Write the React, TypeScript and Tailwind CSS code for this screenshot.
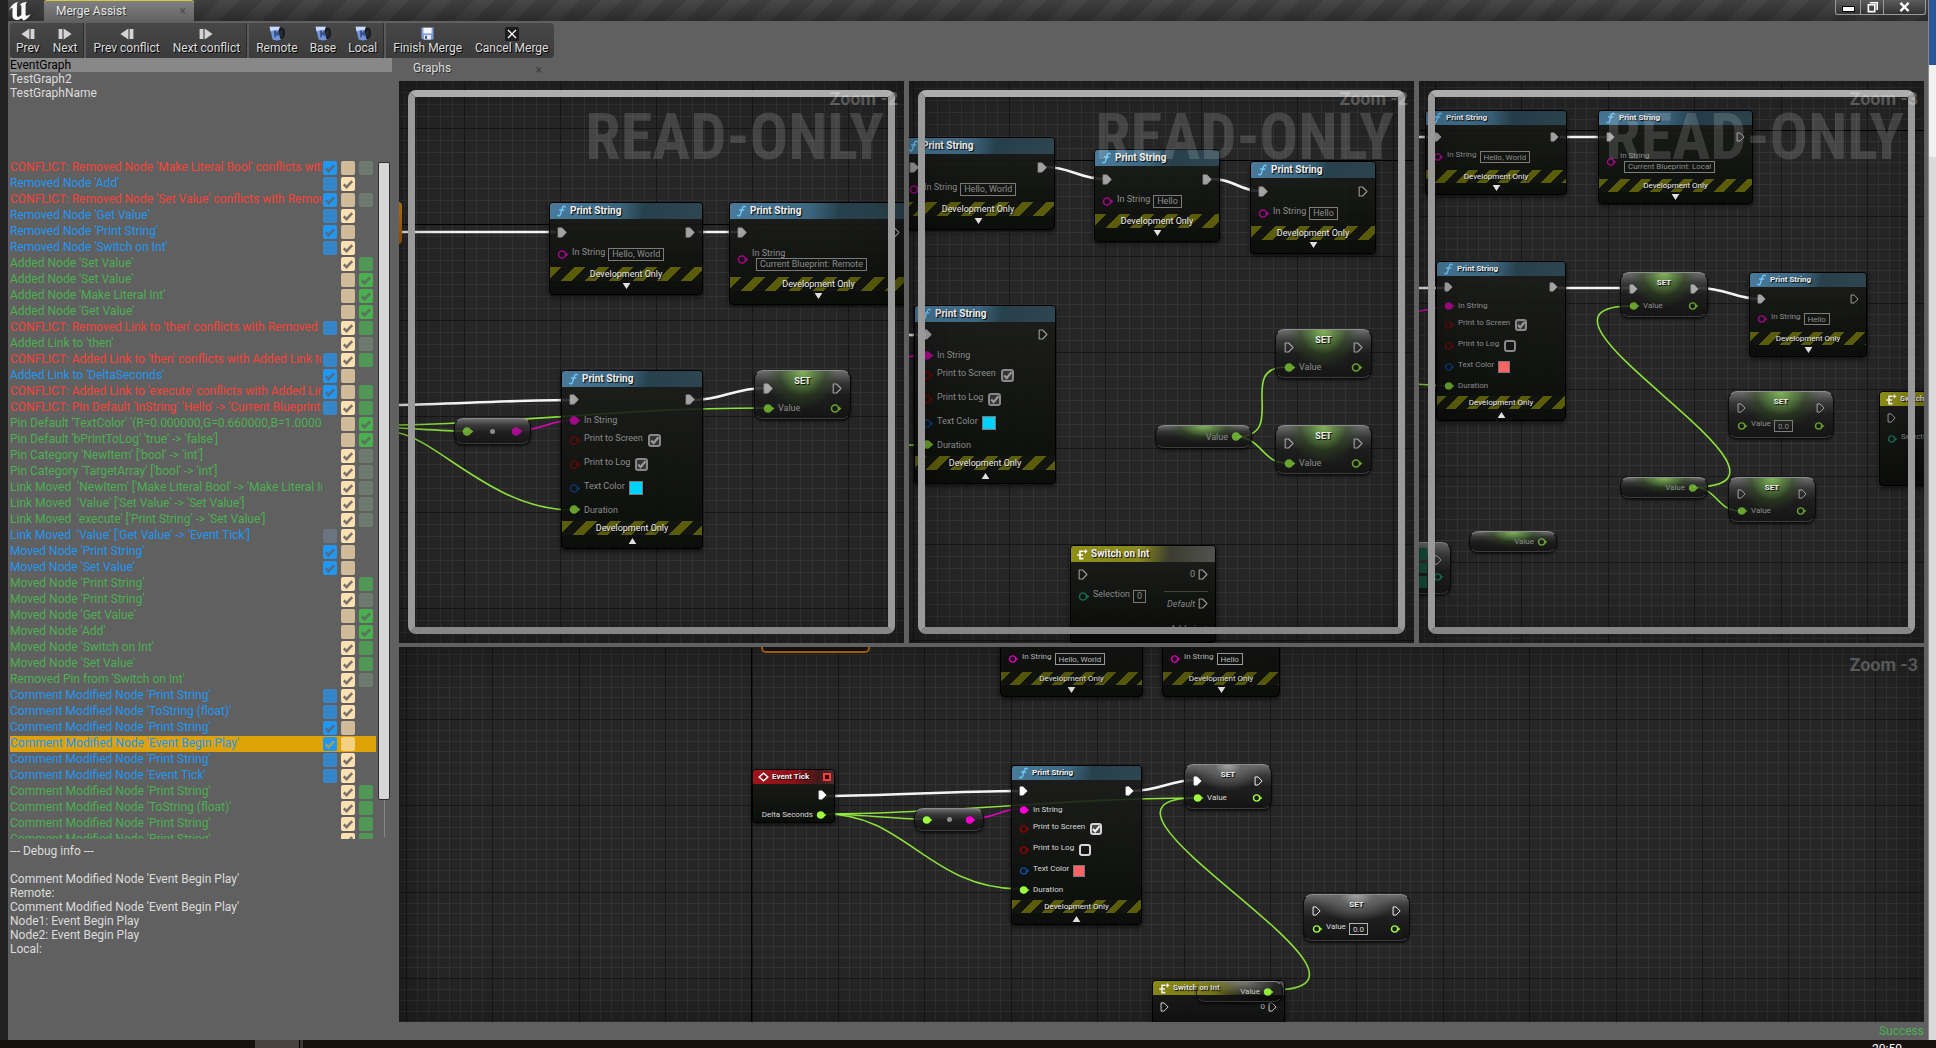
import { createContext, useContext, useId, type ReactNode } from "react";

/* ---------- canvas context ---------- */

type View = { small: boolean; dim: boolean };
const ViewContext = createContext<View>({ small: false, dim: false });
const useView = () => useContext(ViewContext);

const LIME = "#9dff3f";
const MAGENTA = "#ff00d4";
const RED = "#930000";
const BLUE = "#0b4da8";
const TEAL = "#1ba57c";

/* ---------- pins ---------- */

function ExecPin({ filled = false }: { filled?: boolean }) {
  const { dim, small } = useView();
  return (
    <svg
      viewBox="0 0 10 11"
      className={`${small ? "h-[10px] w-[9px]" : "h-[11px] w-[10px]"} shrink-0 ${dim ? "opacity-60" : ""}`}
    >
      <path
        d="M1.2 1H4.6L9 5.5L4.6 10H1.2Z"
        fill={filled ? "#fff" : "none"}
        stroke="#f2f2f2"
        strokeWidth="1.1"
        strokeLinejoin="round"
      />
    </svg>
  );
}

function DataPin({ color, filled = false }: { color: string; filled?: boolean }) {
  const { dim, small } = useView();
  return (
    <svg
      viewBox="0 0 12 9"
      className={`${small ? "h-[8px] w-[11px]" : "h-[9px] w-[12px]"} shrink-0 ${dim ? "opacity-60" : ""}`}
    >
      <circle cx="5" cy="4.5" r="3.5" fill={filled ? color : "none"} stroke={color} strokeWidth="1.6" />
      <path d="M9 2.4L11.4 4.5L9 6.6Z" fill={color} />
    </svg>
  );
}

/* ---------- small node parts ---------- */

function Label({ children, raised = false, htmlFor }: { children: ReactNode; raised?: boolean; htmlFor?: string }) {
  const { dim, small } = useView();
  const cls = `${small ? "text-[8px]" : "text-[9px]"} ${dim ? "text-[#8d8d8d]" : "text-[#d8d8d8]"} ${
    raised ? "mb-[4px]" : ""
  } leading-[10px] whitespace-nowrap`;
  return htmlFor ? (
    <label htmlFor={htmlFor} className={cls}>
      {children}
    </label>
  ) : (
    <span className={cls}>{children}</span>
  );
}

function Field({ id, value }: { id: string; value: string }) {
  const { dim, small } = useView();
  return (
    <input
      id={id}
      readOnly
      defaultValue={value}
      className={`${small ? "h-[12px] text-[8px]" : "h-[13px] text-[9px]"} ${
        dim ? "border-[#7c7c7c] text-[#8d8d8d]" : "border-[#b5b5b5] text-[#d8d8d8]"
      } field-sizing-content border bg-transparent px-[3px] leading-[10px] outline-none`}
    />
  );
}

function Tick({ id, checked }: { id: string; checked: boolean }) {
  const { dim, small } = useView();
  return (
    <span className={`relative ml-[2px] flex ${dim ? "opacity-60" : ""}`}>
      <input
        id={id}
        type="checkbox"
        defaultChecked={checked}
        className={`${small ? "size-[12px]" : "size-[13px]"} peer appearance-none rounded-[3px] border-2 border-[#d5d5d5] bg-[#141414] checked:bg-[#4a4a4a]`}
      />
      <svg viewBox="0 0 12 12" className="pointer-events-none absolute inset-0 hidden size-full peer-checked:block">
        <path d="M3 6L5.2 8.4L9.6 3" fill="none" stroke="#f2f2f2" strokeWidth="2" />
      </svg>
    </span>
  );
}

function Row({ h, left, right }: { h: string; left?: ReactNode; right?: ReactNode }) {
  return (
    <div className={`flex items-center justify-between px-2 ${h}`}>
      <div className="flex items-center gap-[3px]">{left}</div>
      <div className="flex items-center gap-[3px]">{right}</div>
    </div>
  );
}

function DevelopmentOnly({ open = false }: { open?: boolean }) {
  const { small } = useView();
  return (
    <>
      <div
        className={`${
          small
            ? "h-[13px] bg-[repeating-linear-gradient(135deg,#5b5d0b_0_7px,#12140f_7px_15px)] text-[8px]"
            : "h-[14px] bg-[repeating-linear-gradient(135deg,#5b5d0b_0_8px,#12140f_8px_17px)] text-[9px]"
        } mx-px flex items-center justify-center leading-none whitespace-nowrap text-[#ececec] [text-shadow:1px_1px_1px_#000]`}
      >
        Development Only
      </div>
      <div className={`${small ? "h-[12px]" : "h-[14px]"} flex justify-center ${open ? "pt-[3px]" : "pt-[2px]"}`}>
        <svg viewBox="0 0 9 7" className={`h-[6px] w-[9px] ${open ? "rotate-180" : ""}`}>
          <path d="M0 0H9L4.5 7Z" fill="#e0e0e0" />
        </svg>
      </div>
    </>
  );
}

function Shell({ x, y, w, children }: { x: number; y: number; w: number; children: ReactNode }) {
  return (
    <div
      className="absolute overflow-hidden rounded-[4px] border border-black bg-linear-to-b from-[#1b1d1bdd] to-[#0a0c09f0] shadow-[0_2px_4px_#000a]"
      style={{ left: x, top: y, width: w }}
    >
      <div className="-m-px">{children}</div>
    </div>
  );
}

const TITLE_TONE = {
  blue: "bg-[linear-gradient(100deg,#4a7b9c_0%,#3c667f_45%,#26404c_62%,#2e4650_100%)]",
  yellow: "bg-[linear-gradient(100deg,#8f8f16_0%,#87871d_48%,#3c3d2f_68%,#525252_100%)]",
  red: "bg-[linear-gradient(100deg,#a3121c_0%,#8d1118_50%,#42191b_80%,#4a3334_100%)]",
};

function Title({ tone, icon, children, extra }: { tone: keyof typeof TITLE_TONE; icon: ReactNode; children: ReactNode; extra?: ReactNode }) {
  const { small } = useView();
  return (
    <div
      className={`${small ? "h-[15px] text-[8px]" : "h-[17px] text-[10px]"} ${TITLE_TONE[tone]} flex items-center gap-[3px] rounded-t-[4px] border-t border-white/25 pr-1 pl-[6px] leading-none font-bold whitespace-nowrap text-[#f0f0f0] [text-shadow:1px_1px_1px_#000]`}
    >
      {icon}
      <span className="grow">{children}</span>
      {extra}
    </div>
  );
}

const FunctionIcon = () => (
  <svg viewBox="0 0 12 13" className="h-[12px] w-[12px] shrink-0">
    <path
      d="M10.6 2.2C10 .8 8.2 1 7.6 3L5.4 10C4.9 11.8 3.4 12.2 2.4 11.2M4.4 5.4H9"
      fill="none"
      stroke="#6ec6f7"
      strokeWidth="1.5"
      strokeLinecap="round"
    />
  </svg>
);

const SwitchIcon = () => (
  <svg viewBox="0 0 12 12" className="h-[11px] w-[12px] shrink-0">
    <path d="M7.5 2.5H3.8V10.5H7.5M.8 6.5H7" fill="none" stroke="#fff" strokeWidth="1.7" />
    <path d="M9.8 .6V4.6M7.8 2.6H11.8" stroke="#fff" strokeWidth="1.5" />
  </svg>
);

/* ---------- nodes ---------- */

type PrintProps = {
  x: number;
  y: number;
  w: number;
  text: string;
  stacked?: boolean;
  inLinked?: boolean;
  outLinked?: boolean;
};

function PrintNode({ x, y, w, text, stacked, inLinked = true, outLinked = true }: PrintProps) {
  const { small } = useView();
  const id = useId();
  const stringRow = stacked ? (small ? "h-[27px]" : "h-[28px]") : "h-[18px]";
  return (
    <Shell x={x} y={y} w={w}>
      <Title tone="blue" icon={<FunctionIcon />}>
        Print String
      </Title>
      <Row
        h={small ? "h-[23px]" : "h-[26px]"}
        left={<ExecPin filled={inLinked} />}
        right={<ExecPin filled={outLinked} />}
      />
      <Row
        h={stringRow}
        left={
          <>
            <DataPin color={MAGENTA} />
            {stacked ? (
              <div className="flex flex-col">
                <Label htmlFor={id}>In String</Label>
                <div className="ml-1 flex">
                  <Field id={id} value={text} />
                </div>
              </div>
            ) : (
              <>
                <Label raised htmlFor={id}>
                  In String
                </Label>
                <Field id={id} value={text} />
              </>
            )}
          </>
        }
      />
      <div className="h-[4px]" />
      <DevelopmentOnly />
    </Shell>
  );
}

function PrintNodeOpen({ x, y, w, log, swatch, outLinked = true }: { x: number; y: number; w: number; log: boolean; swatch: string; outLinked?: boolean }) {
  const { small } = useView();
  const id = useId();
  const row = small ? "h-[21px]" : "h-[24px]";
  return (
    <Shell x={x} y={y} w={w}>
      <Title tone="blue" icon={<FunctionIcon />}>
        Print String
      </Title>
      <Row h={small ? "h-[22px]" : "h-[25px]"} left={<ExecPin filled />} right={<ExecPin filled={outLinked} />} />
      <Row
        h="h-[16px]"
        left={
          <>
            <DataPin color={MAGENTA} filled />
            <Label>In String</Label>
          </>
        }
      />
      <Row
        h={row}
        left={
          <>
            <DataPin color={RED} />
            <Label raised htmlFor={`${id}s`}>
              Print to Screen
            </Label>
            <Tick id={`${id}s`} checked />
          </>
        }
      />
      <Row
        h={row}
        left={
          <>
            <DataPin color={RED} />
            <Label raised htmlFor={`${id}l`}>
              Print to Log
            </Label>
            <Tick id={`${id}l`} checked={log} />
          </>
        }
      />
      <Row
        h={row}
        left={
          <>
            <DataPin color={BLUE} />
            <Label raised htmlFor={`${id}c`}>
              Text Color
            </Label>
            <button
              id={`${id}c`}
              aria-label="Text Color"
              className={`${small ? "size-[12px]" : "size-[14px]"} ${swatch} ml-px border border-[#777]`}
            />
          </>
        }
      />
      <Row
        h={small ? "h-[17px]" : "h-[19px]"}
        left={
          <>
            <DataPin color={LIME} filled />
            <Label>Duration</Label>
          </>
        }
      />
      <div className="h-[2px]" />
      <DevelopmentOnly open />
    </Shell>
  );
}

type Glow = "green" | "white" | "none" | "ghost";

function Pill({ x, y, w, glow, children }: { x: number; y: number; w: number; glow: Glow; children: ReactNode }) {
  const tint = {
    green:
      "border-l-[#0a0a0a] bg-[radial-gradient(ellipse_38%_80%_at_50%_0%,#82b45a_0%,#5a853ecc_35%,#2f4a1e80_65%,#2f4a1e00_100%),linear-gradient(#6d6d6d_0%,#383838_24%,#1c1c1ccc_50%,#101010cc_100%)]",
    white:
      "border-l-[#0a0a0a] bg-[radial-gradient(ellipse_40%_60%_at_50%_0%,#a5a5a5_0%,#6a6a6acc_40%,#33333300_100%),linear-gradient(#6d6d6d_0%,#383838_24%,#1c1c1ccc_50%,#101010cc_100%)]",
    none: "border-l-[#0a0a0a] bg-[linear-gradient(#6d6d6d_0%,#3a3a3a_25%,#1d1d1dcc_55%,#121212cc_100%)]",
    ghost:
      "border-l-[#0004] bg-[radial-gradient(ellipse_40%_70%_at_55%_0%,#ffffff66_0%,#ffffff00_100%),linear-gradient(to_right,#0000_0%,#0008_100%)]",
  }[glow];
  return (
    <div
      className={`absolute rounded-[9px] border border-t-[#8d8d8d] border-r-[#0a0a0a] border-b-[#3c3c3c] shadow-[0_2px_3px_#000b] ${tint}`}
      style={{ left: x, top: y, width: w }}
    >
      {children}
    </div>
  );
}

function SetNode({
  x,
  y,
  w,
  glow = "green",
  value,
  inLinked = false,
  outLinked = false,
  valueLinked = false,
}: {
  x: number;
  y: number;
  w: number;
  glow?: Glow;
  value?: string;
  inLinked?: boolean;
  outLinked?: boolean;
  valueLinked?: boolean;
}) {
  const { small } = useView();
  const id = useId();
  return (
    <Pill x={x} y={y} w={w} glow={glow}>
      <div
        className={`${small ? "top-[4px] text-[8px]" : "top-[5px] text-[9px]"} absolute inset-x-0 text-center leading-[11px] font-bold text-[#ececec] [text-shadow:1px_1px_1px_#000]`}
      >
        SET
      </div>
      <div className={small ? "pt-[7px] pb-px" : "pt-[7px]"}>
        <Row
          h={small ? "h-[17px]" : "h-[20px]"}
          left={<ExecPin filled={inLinked} />}
          right={<ExecPin filled={outLinked} />}
        />
        <Row
          h={value ? "h-[20px]" : small ? "h-[18px]" : "h-[20px]"}
          left={
            <>
              <DataPin color={LIME} filled={valueLinked} />
              <Label raised={!!value} htmlFor={value ? id : undefined}>
                Value
              </Label>
              {value && <Field id={id} value={value} />}
            </>
          }
          right={<DataPin color={LIME} />}
        />
      </div>
    </Pill>
  );
}

function GetNode({ x, y, w, linked = true, glow = "green" }: { x: number; y: number; w: number; linked?: boolean; glow?: Glow }) {
  const { small } = useView();
  return (
    <Pill x={x} y={y} w={w} glow={glow}>
      <Row
        h={small ? "h-[19px]" : "h-[21px]"}
        right={
          <>
            <Label>Value</Label>
            <DataPin color={LIME} filled={linked} />
          </>
        }
      />
    </Pill>
  );
}

function ConvertNode({ x, y, w }: { x: number; y: number; w: number }) {
  const { small } = useView();
  return (
    <Pill x={x} y={y} w={w} glow="none">
      <div className={`${small ? "h-[21px]" : "h-[24px]"} flex items-center justify-between px-[7px]`}>
        <DataPin color={LIME} filled />
        <span className="size-[5px] rounded-full bg-[#8c8c8c]" />
        <DataPin color={MAGENTA} filled />
      </div>
    </Pill>
  );
}

function SwitchNode({ x, y, w }: { x: number; y: number; w: number }) {
  const { small } = useView();
  const id = useId();
  return (
    <Shell x={x} y={y} w={w}>
      <Title tone="yellow" icon={<SwitchIcon />}>
        Switch on Int
      </Title>
      <Row
        h={small ? "h-[23px]" : "h-[24px]"}
        left={<ExecPin />}
        right={
          <>
            <Label>0</Label>
            <ExecPin />
          </>
        }
      />
      <div className="flex justify-between px-2">
        <div className="flex h-[20px] items-center gap-[3px]">
          <DataPin color={TEAL} />
          <Label raised htmlFor={id}>
            Selection
          </Label>
          <Field id={id} value="0" />
        </div>
        <div className="-mr-1 w-12 pt-[5px] pr-1">
          <div className="flex h-[24px] items-center justify-end gap-[3px] border-t border-[#444] italic">
            <Label>Default</Label>
            <ExecPin />
          </div>
          <div className="flex h-[28px] items-center justify-end gap-1">
            <Label>Add pin +</Label>
          </div>
        </div>
      </div>
    </Shell>
  );
}

function EventTickNode({ x, y, w }: { x: number; y: number; w: number }) {
  return (
    <Shell x={x} y={y} w={w}>
      <Title
        tone="red"
        icon={
          <svg viewBox="0 0 12 10" className="h-[10px] w-[11px] shrink-0">
            <path d="M6 .8L1.2 5L6 9.2L10.8 5Z" fill="none" stroke="#fff" strokeWidth="1.5" />
            <path d="M6 3L8.4 5L6 7Z" fill="#3a0a0c" />
          </svg>
        }
        extra={<span className="h-[8px] w-[8px] border-2 border-[#ff3b3b] bg-[#2a0505]" />}
      >
        Event Tick
      </Title>
      <Row h="h-[22px]" right={<ExecPin filled />} />
      <Row
        h="h-[17px]"
        right={
          <>
            <Label>Delta Seconds</Label>
            <DataPin color={LIME} filled />
          </>
        }
      />
    </Shell>
  );
}

/* ---------- graph panel ---------- */

const range = (start: number, step: number, count: number) =>
  Array.from({ length: count }, (_, i) => Math.round(start + i * step));

function Grid({ gx, gy, major, axis }: { gx: number; gy: number; major: number; axis?: { x?: number; y?: number } }) {
  const minor = major / 8;
  const sx = (gx % major) - major;
  const sy = (gy % major) - major;
  const v = (xs: number[]) => xs.map((n) => `M${n} 0V3000`).join("");
  const h = (ys: number[]) => ys.map((n) => `M0 ${n}H4000`).join("");
  return (
    <svg className="absolute inset-0 size-full" shapeRendering="crispEdges" fill="none">
      <g transform="translate(.5 .5)">
        <path d={v(range(sx, minor, 300)) + h(range(sy, minor, 200))} stroke="#333333" />
        <path d={v(range(sx, major, 40)) + h(range(sy, major, 26))} stroke="#171717" />
        {axis?.x !== undefined && <path d={`M${axis.x} 0V3000`} stroke="#000" />}
        {axis?.y !== undefined && <path d={`M0 ${axis.y}H4000`} stroke="#000" />}
      </g>
    </svg>
  );
}

function Wire({ d, c = LIME, thick = false }: { d: string; c?: string; thick?: boolean }) {
  return <path d={d} stroke={c} strokeWidth={thick ? 2.6 : 1.6} opacity={thick ? 0.95 : 0.85} />;
}

function GraphPanel({
  zoom,
  origin,
  grid,
  readOnly = false,
  wires,
  children,
}: {
  zoom: number;
  origin: [number, number];
  grid: { gx: number; gy: number; axis?: { x?: number; y?: number } };
  readOnly?: boolean;
  wires: ReactNode;
  children: ReactNode;
}) {
  const small = zoom === -3;
  return (
    <ViewContext.Provider value={{ small, dim: readOnly }}>
      <section className="relative min-h-0 min-w-0 overflow-hidden bg-[#262626]">
        <Grid {...grid} major={small ? 86.4 : 96} />
        <div className="absolute top-0 left-0" style={{ transform: `translate(${-origin[0]}px, ${-origin[1]}px)` }}>
          <svg className="absolute top-0 left-0 h-[1100px] w-[2000px]" fill="none">
            {wires}
          </svg>
          {children}
        </div>
        <div className="pointer-events-none absolute inset-0 shadow-[inset_0_0_60px_#0007]" />
        {readOnly && (
          <>
            <div className="pointer-events-none absolute inset-[9px] rounded-[8px] border-[7px] border-t-[#adadad] border-r-[#999] border-b-[#868686] border-l-[#999]" />
            <div className="pointer-events-none absolute top-[25px] right-[20px] font-['Roboto_Condensed','Liberation_Sans_Narrow',Roboto,sans-serif] text-[64px] leading-[64px] font-bold whitespace-nowrap text-white/15">
              READ-ONLY
            </div>
          </>
        )}
        <div className="pointer-events-none absolute top-[8px] right-[6px] text-[18px] leading-[20px] font-bold whitespace-nowrap text-white/25">
          Zoom {zoom}
        </div>
      </section>
    </ViewContext.Provider>
  );
}

/* ---------- change list ---------- */

type Kind = "c" | "r" | "l";
/* r / b / l box state: 1 ticked, 0 clear, x unavailable, - absent */
type Change = [Kind, string, string];

const CHANGES: Change[] = [
  ["c", "CONFLICT: Removed Node 'Make Literal Bool' conflicts with Removed Node", "10x"],
  ["r", "Removed Node 'Add'", "01-"],
  ["c", "CONFLICT: Removed Node 'Set Value' conflicts with Removed Node", "10x"],
  ["r", "Removed Node 'Get Value'", "01-"],
  ["r", "Removed Node 'Print String'", "10-"],
  ["r", "Removed Node 'Switch on Int'", "01-"],
  ["l", "Added Node 'Set Value'", "-10"],
  ["l", "Added Node 'Set Value'", "-01"],
  ["l", "Added Node 'Make Literal Int'", "-01"],
  ["l", "Added Node 'Get Value'", "-01"],
  ["c", "CONFLICT: Removed Link to 'then' conflicts with Removed Link", "010"],
  ["l", "Added Link to 'then'", "-1x"],
  ["c", "CONFLICT: Added Link to 'then' conflicts with Added Link to", "010"],
  ["r", "Added Link to 'DeltaSeconds'", "10-"],
  ["c", "CONFLICT: Added Link to 'execute' conflicts with Added Link", "100"],
  ["c", "CONFLICT: Pin Default 'InString' 'Hello' -> 'Current Blueprint", "010"],
  ["l", "Pin Default 'TextColor' '(R=0.000000,G=0.660000,B=1.000000", "-01"],
  ["l", "Pin Default 'bPrintToLog' 'true' -> 'false']", "-01"],
  ["l", "Pin Category 'NewItem' ['bool' -> 'int']", "-1x"],
  ["l", "Pin Category 'TargetArray' ['bool' -> 'int']", "-1x"],
  ["l", "Link Moved  'NewItem' ['Make Literal Bool' -> 'Make Literal Int']", "-1x"],
  ["l", "Link Moved  'Value' ['Set Value' -> 'Set Value']", "-1x"],
  ["l", "Link Moved  'execute' ['Print String' -> 'Set Value']", "-1x"],
  ["r", "Link Moved  'Value' ['Get Value' -> 'Event Tick']", "x1-"],
  ["r", "Moved Node 'Print String'", "10-"],
  ["r", "Moved Node 'Set Value'", "10-"],
  ["l", "Moved Node 'Print String'", "-10"],
  ["l", "Moved Node 'Print String'", "-1x"],
  ["l", "Moved Node 'Get Value'", "-01"],
  ["l", "Moved Node 'Add'", "-01"],
  ["l", "Moved Node 'Switch on Int'", "-10"],
  ["l", "Moved Node 'Set Value'", "-10"],
  ["l", "Removed Pin from 'Switch on Int'", "-1x"],
  ["r", "Comment Modified Node 'Print String'", "01-"],
  ["r", "Comment Modified Node 'ToString (float)'", "01-"],
  ["r", "Comment Modified Node 'Print String'", "10-"],
  ["r", "Comment Modified Node 'Event Begin Play'", "10-"],
  ["r", "Comment Modified Node 'Print String'", "01-"],
  ["r", "Comment Modified Node 'Event Tick'", "01-"],
  ["l", "Comment Modified Node 'Print String'", "-10"],
  ["l", "Comment Modified Node 'ToString (float)'", "-10"],
  ["l", "Comment Modified Node 'Print String'", "-10"],
  ["l", "Comment Modified Node 'Print String'", "-10"],
];
const SELECTED = 36;

const TEXT_TONE: Record<Kind, string> = { c: "text-[#f44336]", r: "text-[#2196f3]", l: "text-[#4caf50]" };
const BOX_TONE = [
  { "1": "bg-[#2196f3]", "0": "bg-[#3686c8]", x: "bg-[#6c7482]" },
  { "1": "bg-[#ffe0b2]", "0": "bg-[#cfbb9a]", x: "bg-[#8a8378]" },
  { "1": "bg-[#4caf50]", "0": "bg-[#529655]", x: "bg-[#6f7a70]" },
];
const SOURCES = ["Remote", "Base", "Local"];

function SourceBox({ column, state, selected, name }: { column: number; state: string; selected: boolean; name: string }) {
  if (state === "-") return <span className="size-[14px]" />;
  const tone = selected && column === 1 ? "bg-[#f5d081]" : BOX_TONE[column][state as "0" | "1" | "x"];
  return (
    <span className="relative flex size-[14px]">
      <input
        type="checkbox"
        aria-label={`${SOURCES[column]}: ${name}`}
        defaultChecked={state === "1"}
        disabled={state === "x"}
        className={`peer size-[14px] appearance-none rounded-[2px] ${tone}`}
      />
      <svg viewBox="0 0 14 14" className="pointer-events-none absolute inset-0 hidden size-[14px] peer-checked:block">
        <path
          d="M2.8 7.4L5.6 10.2L11.2 4.2"
          fill="none"
          stroke={selected ? "#a9a351" : "#606060"}
          strokeOpacity={column === 1 || selected ? 0.85 : 0.75}
          strokeWidth="2.6"
        />
      </svg>
    </span>
  );
}

function ChangeList() {
  return (
    <div className="flex h-[679px] gap-[2px] overflow-hidden">
      <ul className="min-w-0 grow">
        {CHANGES.map(([kind, text, boxes], i) => (
          <li key={i} className={`flex h-[16px] pr-[3px] ${i === SELECTED ? "bg-[#dea208]" : ""}`}>
            <span className={`min-w-0 grow overflow-hidden leading-[14px] whitespace-pre ${TEXT_TONE[kind]}`}>{text}</span>
            <span className="flex shrink-0 gap-1 pt-px pl-px">
              {[0, 1, 2].map((c) => (
                <SourceBox key={c} column={c} state={boxes[c]} selected={i === SELECTED} name={text} />
              ))}
            </span>
          </li>
        ))}
      </ul>
      <div className="flex w-[12px] shrink-0 flex-col items-center pt-[2px] pb-[2px]">
        <div className="h-[638px] w-[12px] rounded-[2px] border border-[#2e2e2e] bg-[#d6d6d6]" />
        <div className="w-px grow bg-[#868686]" />
      </div>
    </div>
  );
}

/* ---------- toolbar ---------- */

const StepIcon = ({ back = false }: { back?: boolean }) => (
  <svg viewBox="0 0 14 12" className={`h-[12px] w-[14px] ${back ? "-scale-x-100" : ""}`}>
    <path d="M.6 1H4.4V11H.6ZM5.6 .5L13.6 6L5.6 11.5Z" fill="#d4d4d4" />
  </svg>
);

const DiffIcon = () => (
  <svg viewBox="0 0 16 15" className="h-[15px] w-[16px]">
    <path d="M4 1.5H14L16 4.5V10L13.5 13H4Z" fill="#1c1d22" />
    <path d="M.6 .8H10.8L9.2 5.2L11.8 13.8C8.4 14.6 5.4 14.6 3.6 13.6Z" fill="#6f93dc" />
    <path d="M.6 .8H10.8L9.6 4.2C7 3.6 4.6 4.2 1.6 5.4Z" fill="#c9d9f7" />
    <path d="M5 5L7 4.6V7L9.6 4.4V10.4L7 8.4V11L5.4 11.4Z" fill="#3a4f86" />
    <path d="M9.4 7.4L13.6 3.2V11.4Z" fill="#2b2d34" />
  </svg>
);

const SaveIcon = () => (
  <svg viewBox="0 0 13 13" className="h-[13px] w-[13px]">
    <path d="M.5 .5H12.5V12.5H2L.5 11Z" fill="#7f9fd8" />
    <rect x="2.4" y=".8" width="8.2" height="5.6" fill="#f4f6fb" />
    <rect x="3" y="8" width="7" height="4.5" fill="#e4e9f4" />
    <rect x="4" y="8.8" width="2" height="3.2" fill="#3a5fa8" />
  </svg>
);

const CancelIcon = () => (
  <svg viewBox="0 0 14 14" className="h-[14px] w-[14px]">
    <rect width="14" height="14" rx="1.5" fill="#1c1c1c" />
    <path d="M3 3L11 11M11 3L3 11" stroke="#fff" strokeWidth="1.3" />
  </svg>
);

function Tool({ icon, children }: { icon: ReactNode; children: ReactNode }) {
  return (
    <button className="flex flex-col items-center px-[6px] pt-[3px] leading-[14px] whitespace-nowrap text-[#dcdcdc] [text-shadow:1px_1px_0_#000]">
      <span className="flex h-[15px] items-center">{icon}</span>
      {children}
    </button>
  );
}

const Divider = () => <span className="mx-px w-[2px] bg-[#5a5a5a] shadow-[-1px_0_0_#2c2c2c]" />;

function TitleBar() {
  return (
    <header className="flex h-[21px] bg-[linear-gradient(#0000,#0005),repeating-linear-gradient(135deg,#484848_0_14px,#3f3f3f_14px_30px)]">
      <div className="flex w-[36px] items-center">
        <svg viewBox="0 0 24 20" className="h-[20px] w-[24px]">
          <path
            d="M1 9.6C2.4 5 5.4 2.2 10.2 .8C9 2 8.9 3 8.9 4.8V14.2C8.9 15.6 9.7 16.2 10.8 15.8C11.8 15.4 12.6 14.8 13.4 13.8V5.2C13.4 4 12.8 3.8 11.6 4.2C13.4 2 15.6 1.2 19 .8C17.8 2 17.6 3 17.6 4.6V13.4C17.6 15.2 19 15.4 22.8 12.8C21.4 16 18.8 18.4 15.6 19.6L13.4 17.2C11.4 19 8.8 19.4 6.6 18.6C5 17.8 4.5 16.4 4.5 14.6V7.6C4.5 6 3.2 6.4 1 9.6Z"
            fill="#fff"
          />
        </svg>
      </div>
      <div className="flex w-[150px] items-center justify-between rounded-t-[3px] border-t border-[#d8c944] bg-linear-to-b from-[#808080] to-[#636363] pr-2 pl-[12px] text-[#e4e4e4] [text-shadow:1px_1px_0_#0008]">
        <span className="leading-[14px]">Merge Assist</span>
        <button aria-label="Close tab" className="leading-[14px] text-[#4d4d4d] [text-shadow:none]">
          ×
        </button>
      </div>
      <div className="ml-auto flex h-[15px] pr-[2px]">
        <button aria-label="Minimize" className="flex w-[26px] items-center justify-center rounded-bl-[3px] border border-t-0 border-[#9a9a9a] bg-linear-to-b from-[#5c5c5c] to-[#333]">
          <span className="mt-[3px] h-[4px] w-[11px] bg-white shadow-[0_0_0_1px_#000]" />
        </button>
        <button aria-label="Restore" className="flex w-[23px] items-center justify-center border border-t-0 border-l-0 border-[#9a9a9a] bg-linear-to-b from-[#5c5c5c] to-[#333]">
          <svg viewBox="0 0 12 12" className="size-[11px]">
            <path d="M3 .8H11.2V8.6M1.5 3H8.5V10.5H1.5Z" fill="none" stroke="#fff" strokeWidth="1.8" />
          </svg>
        </button>
        <button aria-label="Close" className="flex w-[42px] items-center justify-center rounded-br-[3px] border border-t-0 border-l-0 border-[#9a9a9a] bg-linear-to-b from-[#5c5c5c] to-[#333]">
          <svg viewBox="0 0 12 11" className="h-[10px] w-[11px]">
            <path d="M1.5 1L10.5 10M10.5 1L1.5 10" stroke="#fff" strokeWidth="2.6" />
          </svg>
        </button>
      </div>
    </header>
  );
}

/* ---------- graph contents ---------- */

function RemoteGraph() {
  return (
    <GraphPanel
      zoom={-2}
      origin={[399, 81]}
      grid={{ gx: 65, gy: 47, axis: { y: 143 } }}
      readOnly
      wires={
        <>
          <Wire thick c="#fff" d="M401 232H556M698 232H740" />
          <Wire thick c="#fff" d="M399 405C450 404 520 400 572 400" />
          <Wire thick c="#fff" d="M694 400C722 400 735 388 764 388" />
          <Wire d="M399 425C520 423 620 408 764 408" />
          <Wire d="M399 428C420 429 445 431 466 431" />
          <Wire d="M399 433C440 442 495 510 572 510" />
          <Wire c={MAGENTA} d="M515 431C540 431 552 420 572 420" />
        </>
      }
    >
      <div className="absolute top-[202px] left-[390px] h-[42px] w-[12px] rounded-r-[4px] bg-linear-to-b from-[#d98c0c] to-[#b05a04]" />
      <PrintNode x={549} y={202} w={154} text="Hello, World" />
      <PrintNode x={729} y={202} w={179} text="Current Blueprint: Remote" stacked outLinked={false} />
      <ConvertNode x={454} y={418} w={77} />
      <PrintNodeOpen x={561} y={370} w={142} log swatch="bg-[#00d2ff]" />
      <SetNode x={754} y={370} w={97} inLinked valueLinked />
    </GraphPanel>
  );
}

function BaseGraph() {
  return (
    <GraphPanel
      zoom={-2}
      origin={[909, 81]}
      grid={{ gx: 4, gy: 79, axis: { y: 79 } }}
      readOnly
      wires={
        <>
          <Wire thick c="#fff" d="M1046 167C1070 167 1080 179 1104 179" />
          <Wire thick c="#fff" d="M1212 179C1234 179 1240 191 1260 191" />
          <Wire thick c="#fff" d="M905 335H926" />
          <Wire c={MAGENTA} d="M905 357L926 355" />
          <Wire d="M905 445H926" />
          <Wire d="M1236 437C1290 437 1235 367 1286 367" />
          <Wire d="M1236 437C1262 437 1262 463 1286 463" />
        </>
      }
    >
      <PrintNode x={901} y={137} w={154} text="Hello, World" />
      <PrintNode x={1094} y={149} w={126} text="Hello" />
      <PrintNode x={1250} y={161} w={126} text="Hello" outLinked={false} />
      <PrintNodeOpen x={914} y={305} w={142} log swatch="bg-[#00d2ff]" outLinked={false} />
      <SetNode x={1275} y={329} w={97} valueLinked />
      <SetNode x={1275} y={425} w={97} valueLinked />
      <GetNode x={1155} y={425} w={97} />
      <SwitchNode x={1070} y={545} w={146} />
    </GraphPanel>
  );
}

function LocalGraph() {
  return (
    <GraphPanel
      zoom={-3}
      origin={[1419, 81]}
      grid={{ gx: 16, gy: 49, axis: { y: 49 } }}
      readOnly
      wires={
        <>
          <Wire thick c="#fff" d="M1415 137H1436M1560 137H1606M1415 288H1446M1558 288H1630" />
          <Wire thick c="#fff" d="M1698 288C1727 288 1735 299 1760 299" />
          <Wire c={MAGENTA} d="M1415 312L1446 306" />
          <Wire d="M1415 384L1446 386" />
          <Wire d="M1693 487C1840 487 1490 306 1632 306" />
          <Wire d="M1693 487C1717 487 1717 511 1740 511" />
        </>
      }
    >
      <PrintNode x={1425} y={110} w={142} text="Hello, World" />
      <PrintNode x={1598} y={110} w={155} text="Current Blueprint: Local" stacked outLinked={false} />
      <PrintNodeOpen x={1436} y={261} w={130} log={false} swatch="bg-[#ff6464]" />
      <SetNode x={1620} y={272} w={88} inLinked outLinked valueLinked />
      <PrintNode x={1749} y={272} w={118} text="Hello" outLinked={false} />
      <SetNode x={1728} y={391} w={106} value="0.0" />
      <SetNode x={1728} y={477} w={88} valueLinked />
      <GetNode x={1620} y={477} w={88} />
      <GetNode x={1469} y={531} w={88} linked={false} />
      <SwitchNode x={1879} y={391} w={132} />
      <Pill x={1390} y={542} w={61} glow="none">
        <div className="flex h-[50px] justify-between">
          <div className="flex w-[36px] flex-col justify-center gap-[3px]">
            <span className="h-[12px] bg-[#174f3f]" />
            <span className="h-[10px] bg-[#174f3f]" />
            <span className="h-[12px] bg-[#174f3f]" />
          </div>
          <div className="flex flex-col gap-2 pt-3 pr-[6px]">
            <ExecPin />
            <DataPin color={TEAL} />
          </div>
        </div>
      </Pill>
    </GraphPanel>
  );
}

function MergedGraph() {
  return (
    <GraphPanel
      zoom={-3}
      origin={[399, 647]}
      grid={{ gx: 7, gy: 72, axis: { x: 352 } }}
      wires={
        <>
          <Wire thick c="#fff" d="M826 796C890 796 950 791 1018 791" />
          <Wire thick c="#fff" d="M1132 791C1160 791 1170 780 1196 780" />
          <Wire d="M826 814C950 814 1060 798 1196 798" />
          <Wire d="M826 814C860 814 890 819 926 819" />
          <Wire d="M826 814C905 814 930 889 1020 889" />
          <Wire c={MAGENTA} d="M969 819C995 819 1000 809 1020 809" />
          <Wire d="M1272 990C1426 990 1046 798 1196 798" />
        </>
      }
    >
      <div className="absolute top-[620px] left-[761px] h-[33px] w-[109px] rounded-[5px] border-2 border-[#c8720c] bg-[#151515]" />
      <PrintNode x={1000} y={612} w={143} text="Hello, World" />
      <PrintNode x={1162} y={612} w={118} text="Hello" />
      <EventTickNode x={752} y={769} w={83} />
      <ConvertNode x={914} y={808} w={70} />
      <PrintNodeOpen x={1011} y={765} w={131} log={false} swatch="bg-[#ff6464]" />
      <SetNode x={1184} y={764} w={88} glow="white" inLinked valueLinked />
      <SetNode x={1303} y={894} w={107} glow="white" value="0.0" />
      <SwitchNode x={1152} y={980} w={133} />
      <GetNode x={1196} y={981} w={87} glow="ghost" />
    </GraphPanel>
  );
}

/* ---------- page ---------- */

const DEBUG_INFO = `--- Debug info ---

Comment Modified Node 'Event Begin Play'
Remote:
Comment Modified Node 'Event Begin Play'
Node1: Event Begin Play
Node2: Event Begin Play
Local:`;

export default function App() {
  return (
    <div className="flex h-screen flex-col overflow-hidden bg-[#222] font-['Roboto',sans-serif] text-[12px]">
      <div className="flex min-h-0 grow">
        <div className="w-[8px] shrink-0 bg-[#222]" />
        <div className="flex min-w-0 grow flex-col bg-[#606060]">
          <TitleBar />
          <nav className="mt-[2px] ml-[2px] flex h-[35px] w-fit rounded-[4px] bg-linear-to-b from-[#474747] to-[#3b3b3b]">
            <Tool icon={<StepIcon back />}>Prev</Tool>
            <span className="w-px" />
            <Tool icon={<StepIcon />}>Next</Tool>
            <Divider />
            <Tool icon={<StepIcon back />}>Prev conflict</Tool>
            <span className="w-px" />
            <Tool icon={<StepIcon />}>Next conflict</Tool>
            <Divider />
            <Tool icon={<DiffIcon />}>Remote</Tool>
            <Tool icon={<DiffIcon />}>Base</Tool>
            <Tool icon={<DiffIcon />}>Local</Tool>
            <Divider />
            <Tool icon={<SaveIcon />}>Finish Merge</Tool>
            <span className="w-px" />
            <Tool icon={<CancelIcon />}>Cancel Merge</Tool>
          </nav>

          <main className="flex min-h-0 grow">
            <aside className="flex w-[391px] shrink-0 flex-col pr-[7px] pl-[2px]">
              <div className="flex h-[102px] flex-col leading-[14px] text-[#dcdcdc]">
                <button className="bg-[#888] text-left text-black">EventGraph</button>
                <button className="text-left">TestGraph2</button>
                <button className="text-left">TestGraphName</button>
              </div>
              <div className="pr-[2px]">
                <ChangeList />
              </div>
              <pre className="mt-[5px] font-['Roboto',sans-serif] leading-[14px] text-[#dcdcdc]">{DEBUG_INFO}</pre>
            </aside>

            <div className="flex min-w-0 grow flex-col pr-[4px]">
              <div className="flex h-[23px] w-[150px] shrink-0 items-center justify-between pr-[7px] pl-[14px] text-[#dcdcdc] [text-shadow:1px_1px_0_#0008]">
                <span className="-mt-[3px]">Graphs</span>
                <button aria-label="Close Graphs" className="text-[#3c3c3c] [text-shadow:none]">
                  ×
                </button>
              </div>
              <div className="grid min-h-0 grow grid-rows-[3fr_2fr] gap-[4px]">
                <div className="grid min-h-0 grid-cols-3 gap-[5px]">
                  <RemoteGraph />
                  <BaseGraph />
                  <LocalGraph />
                </div>
                <MergedGraph />
              </div>
              <div className="flex h-[18px] items-center justify-end leading-[14px] text-[#4caf50]">Success</div>
            </div>
          </main>
        </div>
        <div className="flex w-[8px] shrink-0 flex-col border-l border-[#8a8a8a] bg-[#dadada]">
          <div className="h-[65px] bg-[#2b579a]" />
          <div className="h-[92px] bg-[#f1f1f1]" />
        </div>
      </div>
      <footer className="flex h-[8px] shrink-0 overflow-hidden bg-[#17100d] pl-[255px] text-white">
        <span className="w-[44px] bg-[#4a4242]" />
        <span className="w-[4px] border-l border-black bg-[#3c3535]" />
        <span className="mt-[3px] mr-[34px] ml-auto leading-[12px]">20:50</span>
      </footer>
    </div>
  );
}
